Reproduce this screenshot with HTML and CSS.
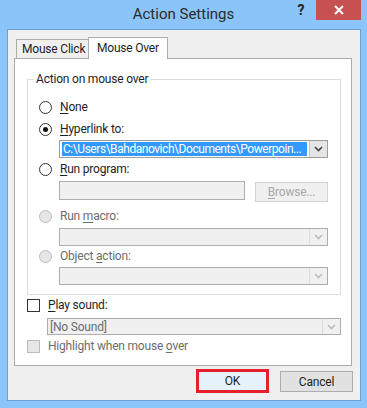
FILE: index.html
```html
<!DOCTYPE html>
<html lang="en">
<head>
    <meta charset="UTF-8">
    <meta name="viewport" content="width=device-width, initial-scale=1.0">
    <title>Action Settings</title>
    <link rel="stylesheet" href="styles.css">
</head>
<body>
    <div class="window">
        <!-- Title Bar -->
        <div class="titlebar">
            <div class="title">Action Settings</div>
            <div class="controls">
                <span class="help">?</span>
                <span class="close">
                    <svg width="10" height="10" viewBox="0 0 10 10">
                        <path d="M1 1 L9 9 M9 1 L1 9" stroke="#fff" stroke-width="2" fill="none"/>
                    </svg>
                </span>
            </div>
        </div>

        <div class="client">
            <!-- Tabs -->
            <div class="tabs">
                <div class="tab">Mouse Click</div>
                <div class="tab active">Mouse Over</div>
            </div>

            <div class="panel">
                <fieldset class="group">
                    <legend>Action on mouse over</legend>

                    <div class="opt">
                        <span class="radio"></span>
                        <span><u>N</u>one</span>
                    </div>

                    <div class="opt opt-gap">
                        <span class="radio checked"></span>
                        <span><u>H</u>yperlink to:</span>
                    </div>
                    <div class="combo active-combo">
                        <div class="combo-value"><span class="selected">C:\Users\Bahdanovich\Documents\Powerpoin...</span></div>
                        <div class="combo-btn">
                            <svg width="9" height="6" viewBox="0 0 9 6"><path d="M1 1 L4.5 4.5 L8 1" stroke="#444" stroke-width="1.6" fill="none"/></svg>
                        </div>
                    </div>

                    <div class="opt opt-tight">
                        <span class="radio"></span>
                        <span><u>R</u>un program:</span>
                    </div>
                    <div class="program-row">
                        <div class="textbox"></div>
                        <div class="btn btn-disabled"><u>B</u>rowse...</div>
                    </div>

                    <div class="opt opt-macro disabled">
                        <span class="radio"></span>
                        <span>Run <u>m</u>acro:</span>
                    </div>
                    <div class="combo">
                        <div class="combo-value"></div>
                        <div class="combo-btn">
                            <svg width="9" height="6" viewBox="0 0 9 6"><path d="M1 1 L4.5 4.5 L8 1" stroke="#bdbdbd" stroke-width="1.6" fill="none"/></svg>
                        </div>
                    </div>

                    <div class="opt opt-none disabled">
                        <span class="radio"></span>
                        <span>Object <u>a</u>ction:</span>
                    </div>
                    <div class="combo">
                        <div class="combo-value"></div>
                        <div class="combo-btn">
                            <svg width="9" height="6" viewBox="0 0 9 6"><path d="M1 1 L4.5 4.5 L8 1" stroke="#bdbdbd" stroke-width="1.6" fill="none"/></svg>
                        </div>
                    </div>
                </fieldset>

                <div class="check-row">
                    <span class="checkbox"></span>
                    <span><u>P</u>lay sound:</span>
                </div>
                <div class="combo sound-combo">
                    <div class="combo-value">[No Sound]</div>
                    <div class="combo-btn">
                        <svg width="9" height="6" viewBox="0 0 9 6"><path d="M1 1 L4.5 4.5 L8 1" stroke="#bdbdbd" stroke-width="1.6" fill="none"/></svg>
                    </div>
                </div>
                <div class="check-row highlight-row disabled">
                    <span class="checkbox"></span>
                    <span>Highlight when mouse <u>o</u>ver</span>
                </div>
            </div>

            <!-- Dialog Buttons -->
            <div class="footer">
                <div class="btn btn-ok">OK</div>
                <div class="btn btn-cancel">Cancel</div>
            </div>
        </div>
    </div>
</body>
</html>
```

FILE: styles.css
```css
/* Global Styles */
* {
    box-sizing: border-box;
}

body {
    margin: 0;
    font-family: "Segoe UI", Roboto, sans-serif;
    font-size: 12px;
    letter-spacing: -0.2px;
    color: #1e1e1e;
}

u {
    text-decoration: underline;
    text-underline-offset: 2px;
}

/* Window Frame */
.window {
    width: 367px;
    height: 408px;
    background: #8bc4f8;
    display: flex;
    flex-direction: column;
}

.titlebar {
    height: 29px;
    display: grid;
    grid-template-columns: 1fr auto 1fr;
    align-items: start;
}

.title {
    grid-column: 2;
    font-size: 15px;
    letter-spacing: 0;
    line-height: 28px;
    color: #2b2b2b;
}

.controls {
    grid-column: 3;
    justify-self: end;
    display: flex;
    margin-right: 6px;
}

.help {
    width: 30px;
    height: 20px;
    line-height: 20px;
    text-align: center;
    font-weight: bold;
    font-size: 14px;
    color: #222;
}

.close {
    width: 45px;
    height: 20px;
    background: #c75050;
    display: flex;
    align-items: center;
    justify-content: center;
}

/* Client Area */
.client {
    flex: 1;
    margin: 0 6px 7px 7px;
    border: 1px solid #6c9fd0;
    background: #f0f0f0;
    padding: 7px 8px 0 6px;
    display: flex;
    flex-direction: column;
}

/* Tabs */
.tabs {
    display: flex;
    align-items: flex-end;
    height: 21px;
    padding-left: 2px;
}

.tab {
    height: 19px;
    width: 73px;
    border: 1px solid #acacac;
    border-bottom: none;
    background: #f0f0f0;
    padding-left: 5px;
    line-height: 19px;
    white-space: nowrap;
}

.tab.active {
    height: 22px;
    width: 80px;
    margin-left: -1px;
    margin-bottom: -1px;
    background: #fff;
    padding-left: 8px;
    line-height: 20px;
    position: relative;
}

/* Tab Panel */
.panel {
    height: 308px;
    background: #fff;
    border: 1px solid #acacac;
    padding: 0 10px 0 12px;
}

.group {
    margin: 12px 0 0;
    border: 1px solid #dcdcdc;
    padding: 10px 0 9px 6px;
}

.group legend {
    padding: 0 2px;
    line-height: 16px;
}

.opt {
    display: flex;
    align-items: center;
    height: 20px;
    margin-left: 5px;
    gap: 8px;
}

.opt-gap {
    margin-top: 2px;
    margin-bottom: 1px;
}

.opt-tight {
    margin-top: 1px;
    margin-bottom: 2px;
}

.opt-macro {
    margin-top: 4px;
    margin-bottom: 2px;
}

.opt-none {
    margin-bottom: 1px;
}

.disabled {
    color: #6d6d6d;
}

.radio {
    width: 13px;
    height: 13px;
    border-radius: 50%;
    border: 1px solid #333;
    background: #fff;
    display: flex;
    align-items: center;
    justify-content: center;
}

.radio.checked::after {
    content: "";
    width: 5px;
    height: 5px;
    border-radius: 50%;
    background: #111;
}

.disabled .radio,
.disabled .checkbox {
    border-color: #bcbcbc;
    background: #e6e6e6;
}

/* Combo Boxes */
.combo {
    margin-left: 25px;
    width: 269px;
    height: 18px;
    border: 1px solid #adadad;
    background: #f0f0f0;
    display: flex;
}

.combo-value {
    flex: 1;
    overflow: hidden;
    white-space: nowrap;
    padding: 1px 2px;
    line-height: 14px;
}

.combo-btn {
    width: 18px;
    border-left: 1px solid #dcdcdc;
    display: flex;
    align-items: center;
    justify-content: center;
}

.active-combo {
    border-color: #9c9c9c;
    background: #fff;
}

.active-combo .combo-btn {
    background: #e5e5e5;
    border-left-color: #c4c4c4;
}

.selected {
    display: block;
    background: #3399ff;
    color: #fff;
    padding-left: 1px;
    letter-spacing: -0.45px;
}

.program-row {
    display: flex;
    align-items: flex-start;
    margin-left: 25px;
    gap: 10px;
}

.textbox {
    width: 186px;
    height: 19px;
    border: 1px solid #adadad;
    background: #f0f0f0;
}

/* Buttons */
.btn {
    width: 73px;
    height: 21px;
    border: 1px solid #adadad;
    background: #e1e1e1;
    display: flex;
    align-items: center;
    justify-content: center;
}

.btn-disabled {
    margin-top: 1px;
    height: 20px;
    border-color: #d4d4d4;
    background: #f0f0f0;
    color: #a8a8a8;
}

/* Sound Options */
.check-row {
    display: flex;
    align-items: center;
    height: 16px;
    margin-top: 2px;
    gap: 8px;
}

.checkbox {
    width: 13px;
    height: 13px;
    border: 1px solid #333;
    background: #fff;
}

.sound-combo {
    margin: 5px 0 0 20px;
    width: 294px;
    height: 17px;
    color: #6d6d6d;
}

.highlight-row {
    margin-top: 3px;
}

/* Footer */
.footer {
    display: flex;
    justify-content: flex-end;
    align-items: flex-start;
    padding-top: 3px;
    margin-right: -1px;
    gap: 11px;
}

.btn-ok {
    height: 24px;
    border: 3px solid #e3202c;
    background: #e5f1fb;
}

.btn-cancel {
    margin-top: 2px;
}
```
